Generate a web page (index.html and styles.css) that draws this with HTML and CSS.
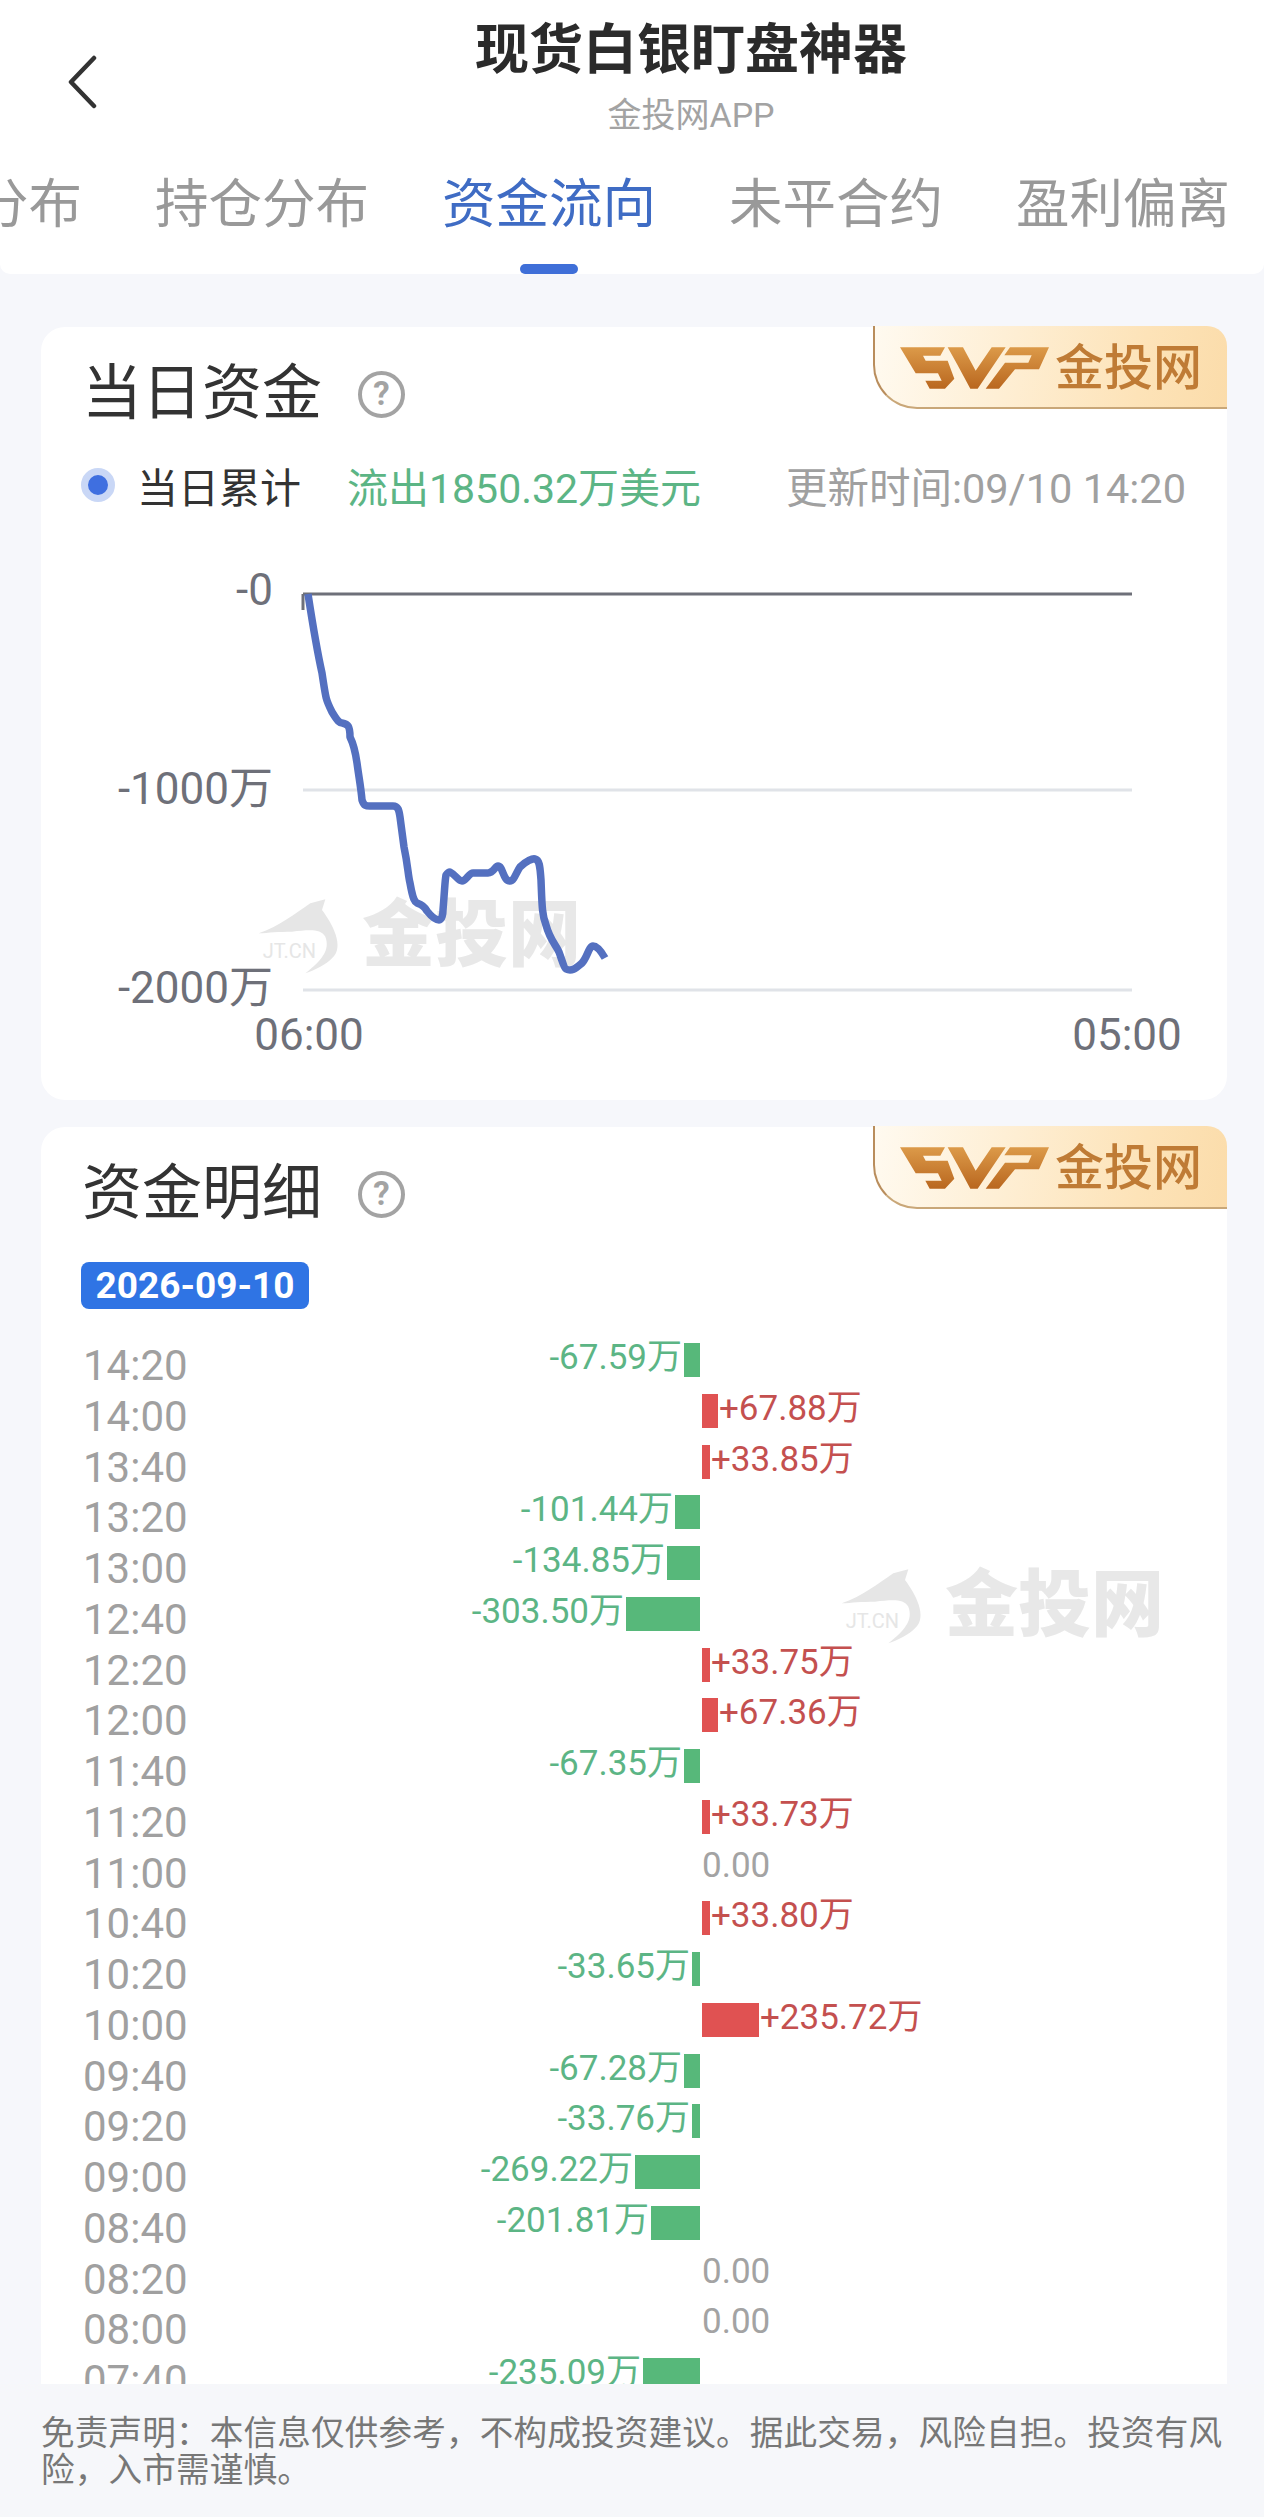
FILE: index.html
```html
<!DOCTYPE html>
<html lang="zh-CN">
<head>
  <meta charset="UTF-8" />
  <meta name="viewport" content="width=device-width, initial-scale=1.0"/>
  <title>现货白银盯盘神器</title>
  <link rel="stylesheet" href="styles.css">
</head>
<body>
  <svg class="defs" width="0" height="0">
    <defs>
      <linearGradient id="gold" x1="0" y1="0" x2="0" y2="1">
        <stop offset="0" stop-color="#dc9a49"/>
        <stop offset="1" stop-color="#b9671f"/>
      </linearGradient>
      <symbol id="svp" viewBox="0 0 480 168">
        <path fill="url(#gold)" d="M15 22H150L136 47H84L92 62H158L178 116L150 146H104L91 122H140L129 100H62Z"/>
        <path fill="url(#gold)" d="M158 22H204L242 92L290 22H332L248 146H226L186 72Z"/>
        <path fill="url(#gold)" d="M345 22H462L432 88H360L312 146H272L330 68H400L410 46H328Z"/>
      </symbol>
      <symbol id="bird" viewBox="0 0 330 270">
        <path fill="#e6e6e6" d="M50 130C110 110 160 70 205 40L250 28L240 60C270 100 310 170 270 205C250 225 220 240 190 250C240 210 265 180 250 140C235 115 200 120 150 125C110 125 80 128 50 130Z"/>
        <text x="62" y="205" font-size="60" fill="#e6e6e6" font-family="Roboto, sans-serif">JT.CN</text>
      </symbol>
    </defs>
  </svg>

  <div class="page">
    <header class="header">
      <div class="header-top">
        <svg class="back" viewBox="0 0 32 54" fill="none" stroke="#333" stroke-width="4.5" stroke-linecap="round" stroke-linejoin="round">
          <path d="M28 3L5 27L28 51"/>
        </svg>
        <div class="header-title">
          <h1>现货白银盯盘神器</h1>
          <p>金投网APP</p>
        </div>
      </div>
      <nav class="tabs">
        <a>多空分布</a>
        <a>持仓分布</a>
        <a class="active">资金流向</a>
        <a>未平合约</a>
        <a>盈利偏离</a>
      </nav>
    </header>

    <main class="main">
      <section class="card">
        <div class="badge">
          <svg class="svp"><use href="#svp"/></svg>
          <span>金投网</span>
        </div>
        <div class="card-head">
          <h2>当日资金</h2>
          <span class="help">?</span>
        </div>
        <div class="legend">
          <i class="dot"></i>
          <span class="legend-name">当日累计</span>
          <span class="legend-flow">流出1850.32万美元</span>
          <span class="legend-time">更新时间:09/10 14:20</span>
        </div>
        <div class="mark mark-chart">
          <svg><use href="#bird"/></svg>
          <span>金投网</span>
        </div>
        <!-- viewBox uses page coordinates -->
        <svg class="chart" viewBox="41 512 1186 560">
          <line class="grid" x1="303" y1="790" x2="1132" y2="790"/>
          <line class="grid" x1="303" y1="990" x2="1132" y2="990"/>
          <line class="axis" x1="303" y1="594" x2="1132" y2="594"/>
          <line class="axis" x1="303" y1="594" x2="303" y2="610"/>
          <text class="label" x="273" y="605" text-anchor="end">-0</text>
          <text class="label" x="273" y="804" text-anchor="end">-1000万</text>
          <text class="label" x="273" y="1003" text-anchor="end">-2000万</text>
          <text class="label" x="309" y="1050" text-anchor="middle">06:00</text>
          <text class="label" x="1127" y="1050" text-anchor="middle">05:00</text>
          <path class="line" d="M308 594C312 620 316 646 322 673C326 700 326 700 332 712C338 722 340 723 342 723C348 724 350 726 350 737C354 745 356 756 357 763C359 778 361 788 362 800C364 806 366 806 370 806H393C398 806 399 810 400 817C402 832 403 840 404 847C408 866 408 875 410 883C413 900 415 902 417 903C422 905 424 906 427 911C431 916 436 920 439 920C442 920 443 914 443 910C445 885 445 880 446 875C448 872 449 872 450 872C456 875 458 881 462 881C466 881 469 873 473 873H488C494 873 495 866 498 866C503 866 503 881 510 881C514 881 517 871 520 867C526 861 533 858 535 859C540 860 540 868 541 880C542 905 542 915 546 925C550 940 556 945 559 952C562 960 564 968 566 969C572 972 576 968 582 963C587 958 589 946 593 946C597 946 601 951 605 958"/>
        </svg>
      </section>

      <section class="card">
        <div class="badge">
          <svg class="svp"><use href="#svp"/></svg>
          <span>金投网</span>
        </div>
        <div class="card-head">
          <h2>资金明细</h2>
          <span class="help">?</span>
        </div>
        <div class="date">2026-09-10</div>
        <div class="mark mark-list">
          <svg><use href="#bird"/></svg>
          <span>金投网</span>
        </div>
        <div class="rows">
          <div class="row"><span class="time">14:20</span><div class="neg"><span>-67.59万</span><i style="width:16px"></i></div><div class="pos"></div></div>
          <div class="row"><span class="time">14:00</span><div class="neg"></div><div class="pos"><i style="width:16px"></i><span>+67.88万</span></div></div>
          <div class="row"><span class="time">13:40</span><div class="neg"></div><div class="pos"><i style="width:8px"></i><span>+33.85万</span></div></div>
          <div class="row"><span class="time">13:20</span><div class="neg"><span>-101.44万</span><i style="width:25px"></i></div><div class="pos"></div></div>
          <div class="row"><span class="time">13:00</span><div class="neg"><span>-134.85万</span><i style="width:33px"></i></div><div class="pos"></div></div>
          <div class="row"><span class="time">12:40</span><div class="neg"><span>-303.50万</span><i style="width:74px"></i></div><div class="pos"></div></div>
          <div class="row"><span class="time">12:20</span><div class="neg"></div><div class="pos"><i style="width:8px"></i><span>+33.75万</span></div></div>
          <div class="row"><span class="time">12:00</span><div class="neg"></div><div class="pos"><i style="width:16px"></i><span>+67.36万</span></div></div>
          <div class="row"><span class="time">11:40</span><div class="neg"><span>-67.35万</span><i style="width:16px"></i></div><div class="pos"></div></div>
          <div class="row"><span class="time">11:20</span><div class="neg"></div><div class="pos"><i style="width:8px"></i><span>+33.73万</span></div></div>
          <div class="row"><span class="time">11:00</span><div class="neg"></div><div class="pos zero"><span>0.00</span></div></div>
          <div class="row"><span class="time">10:40</span><div class="neg"></div><div class="pos"><i style="width:8px"></i><span>+33.80万</span></div></div>
          <div class="row"><span class="time">10:20</span><div class="neg"><span>-33.65万</span><i style="width:8px"></i></div><div class="pos"></div></div>
          <div class="row"><span class="time">10:00</span><div class="neg"></div><div class="pos"><i style="width:57px"></i><span>+235.72万</span></div></div>
          <div class="row"><span class="time">09:40</span><div class="neg"><span>-67.28万</span><i style="width:16px"></i></div><div class="pos"></div></div>
          <div class="row"><span class="time">09:20</span><div class="neg"><span>-33.76万</span><i style="width:8px"></i></div><div class="pos"></div></div>
          <div class="row"><span class="time">09:00</span><div class="neg"><span>-269.22万</span><i style="width:65px"></i></div><div class="pos"></div></div>
          <div class="row"><span class="time">08:40</span><div class="neg"><span>-201.81万</span><i style="width:49px"></i></div><div class="pos"></div></div>
          <div class="row"><span class="time">08:20</span><div class="neg"></div><div class="pos zero"><span>0.00</span></div></div>
          <div class="row"><span class="time">08:00</span><div class="neg"></div><div class="pos zero"><span>0.00</span></div></div>
          <div class="row"><span class="time">07:40</span><div class="neg"><span>-235.09万</span><i style="width:57px"></i></div><div class="pos"></div></div>
        </div>
      </section>
    </main>

    <footer class="footer">免责声明&#xFF1A;本信息仅供参考&#xFF0C;不构成投资建议。据此交易&#xFF0C;风险自担。投资有风险&#xFF0C;入市需谨慎。</footer>
  </div>
</body>
</html>
```

FILE: styles.css
```css
* {
  box-sizing: border-box;
}
body {
  margin: 0;
  font-family: Roboto, "Noto Sans CJK SC", sans-serif;
  background: #f6f7fb;
  color: #333;
}
.defs {
  position: absolute;
}
.page {
  height: 2517px;
  display: flex;
  flex-direction: column;
  overflow: hidden;
}

/* header */
.header {
  height: 274px;
  padding-top: 21px;
  background: #fff;
  border-radius: 0 0 10px 10px;
  overflow: hidden;
  flex: none;
}
.header-top {
  display: grid;
  grid-template-columns: 118px 1fr;
}
.back {
  width: 32px;
  height: 54px;
  margin: 34px 0 0 66px;
}
.header-title {
  text-align: center;
}
.header-title h1 {
  margin: 0;
  font-size: 54px;
  line-height: 60px;
  font-weight: 700;
  color: #2b2b2b;
}
.header-title p {
  margin: 14px 0 0;
  font-size: 34px;
  line-height: 40px;
  color: #a3a3a3;
}
.tabs {
  display: flex;
  gap: 73px;
  margin: 40px 0 0 -132px;
  white-space: nowrap;
}
.tabs a {
  display: block;
  flex: none;
  font-size: 53.5px;
  line-height: 60px;
  color: #999;
}
.tabs a.active {
  color: #3f6cc4;
}
.tabs a.active::after {
  content: "";
  display: block;
  width: 58px;
  height: 10px;
  margin: 29px auto 0;
  background: #3f6fd8;
  border-radius: 5px;
}

/* cards */
.main {
  flex: 1;
  min-height: 0;
  overflow: hidden;
  padding: 53px 37px 0 41px;
}
.card {
  position: relative;
  background: #fff;
  border-radius: 24px;
  margin-bottom: 27px;
}
.card:first-child {
  height: 773px;
}
.card:last-child {
  border-radius: 24px 24px 0 0;
}
.badge {
  position: absolute;
  top: -1px;
  right: 0;
  width: 354px;
  height: 83px;
  display: flex;
  align-items: center;
  padding: 3px 0 0 20px;
  background: linear-gradient(100deg, #fffaf0, #fde3b8 75%, #fbdcaa);
  border-left: 2px solid #b98d5c;
  border-bottom: 2px solid #c9a778;
  border-radius: 0 20px 0 44px;
}
.svp {
  width: 160px;
  height: 56px;
}
.badge span {
  font-size: 49px;
  font-weight: 500;
  color: #bf7b35;
  line-height: 1;
}
.card-head {
  display: flex;
  align-items: center;
  padding: 40px 0 0 41px;
}
.card-head h2 {
  margin: 0;
  font-size: 60px;
  line-height: 54px;
  font-weight: 400;
  color: #333;
}
.help {
  width: 47px;
  height: 47px;
  margin-left: 36px;
  border: 4.5px solid #a3a3a3;
  border-radius: 50%;
  font-size: 33px;
  line-height: 38px;
  font-weight: 700;
  text-align: center;
  color: #a3a3a3;
}

/* first card */
.legend {
  display: flex;
  align-items: center;
  height: 46px;
  margin-top: 41px;
  padding: 0 41px 0 40px;
  font-size: 41px;
}
.dot {
  width: 34px;
  height: 34px;
  border: 7px solid #c9d7f6;
  border-radius: 50%;
  background: #3f6fe0;
  flex: none;
}
.legend-name {
  margin-left: 22px;
  color: #333;
}
.legend-flow {
  margin-left: 46px;
  color: #5cb585;
}
.legend-time {
  margin-left: auto;
  font-size: 41.5px;
  color: #a0a0a0;
}
.chart {
  display: block;
  position: relative;
  width: 1186px;
  height: 560px;
  margin-top: 4px;
}
.grid {
  stroke: #e0e3e8;
  stroke-width: 3;
}
.axis {
  stroke: #6e7079;
  stroke-width: 3;
}
.label {
  font-size: 44px;
  fill: #6e7079;
}
.line {
  fill: none;
  stroke: #5470c0;
  stroke-width: 7.5;
  stroke-linejoin: round;
}

/* watermark */
.mark {
  position: absolute;
  display: flex;
  align-items: center;
  gap: 10px;
}
.mark svg {
  width: 110px;
  height: 90px;
}
.mark span {
  font-size: 73px;
  line-height: 90px;
  font-weight: 900;
  color: #e8e8e8;
}
.mark-chart {
  left: 201px;
  top: 563px;
}
.mark-list {
  left: 784px;
  top: 433px;
}

/* second card */
.date {
  width: 228px;
  height: 47px;
  margin: 41px 0 0 40px;
  background: #2f74e4;
  border-radius: 8px;
  color: #fff;
  font-size: 37px;
  line-height: 47px;
  font-weight: 700;
  text-align: center;
}
.rows {
  position: relative;
  margin-top: 34px;
  padding-left: 42px;
}
.row {
  display: grid;
  grid-template-columns: 132px 485px 1fr;
  height: 50.75px;
}
.time {
  font-size: 42px;
  line-height: 46px;
  color: #a0a0a0;
}
.neg,
.pos {
  display: flex;
  height: 34px;
  font-size: 35px;
  line-height: 30px;
}
.neg {
  justify-content: flex-end;
  gap: 2px;
  color: #5cb585;
}
.pos {
  margin-left: 2px;
  gap: 1px;
  color: #c4504f;
}
.neg i {
  background: #57b87a;
}
.pos i {
  background: #e05252;
}
.pos.zero {
  margin-left: 2px;
  color: #a3a3a3;
}

/* footer */
.footer {
  flex: none;
  height: 133px;
  padding: 31px 38px 0 41px;
  background: #f6f7fa;
  font-size: 33.6px;
  letter-spacing: 0.17px;
  line-height: 37px;
  color: #777;
}
```
